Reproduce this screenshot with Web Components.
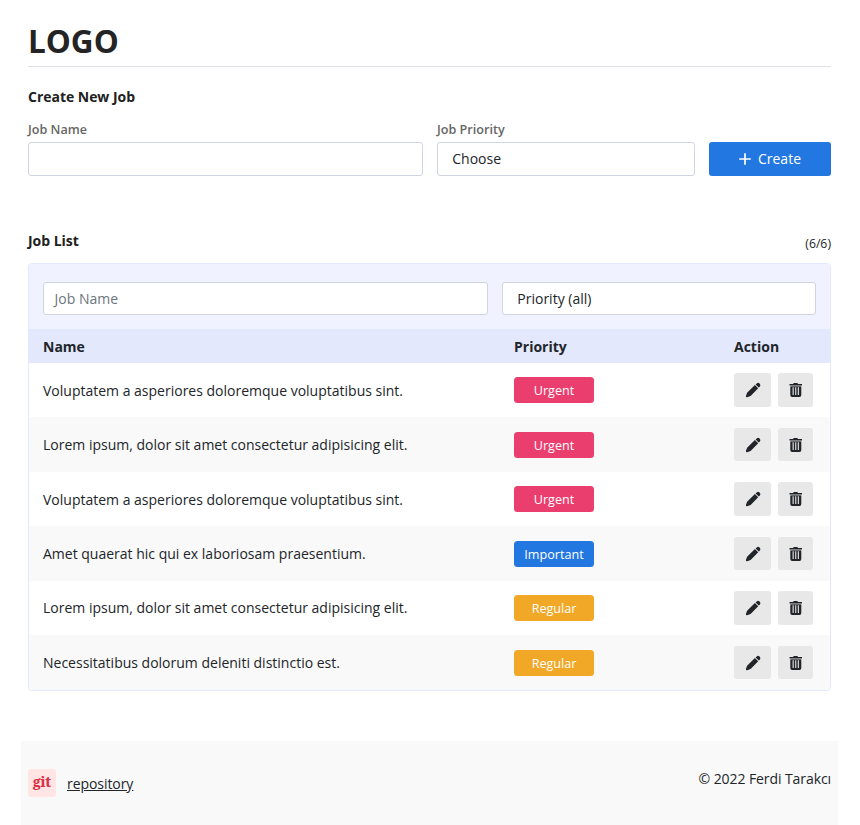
<!DOCTYPE html>
<html lang="en">
<head>
<meta charset="utf-8">
<title>Job List</title>
<style>
body{margin:0;background:#fff;color:#212529;font:14px/21px "Open Sans","Noto Sans",sans-serif}
</style>
</head>
<body>
<job-app></job-app>
<script>
const define=(name,html,setup)=>customElements.define(name,class extends HTMLElement{
  connectedCallback(){
    if(this.shadowRoot)return;
    this.attachShadow({mode:"open"}).innerHTML=html;
    if(setup)setup(this,this.shadowRoot);
  }
});

define("text-field",`<style>
:host{display:block;box-sizing:border-box;height:34px;border:1px solid #ced4e0;border-radius:3px;background:#fff;padding:0 10.5px;line-height:32px}
:host([select]){padding:0 14.3px}
:host([placeholder]){color:#6c757d}
</style><slot></slot>`);

define("create-button",`<style>
:host{display:flex;height:34px;border-radius:3px;background:#2277e0;color:#fff;align-items:center;justify-content:center;gap:7px}
svg{width:12px;height:12px;display:block}
span{height:22px}
</style><svg viewBox="0 0 12 12"><path d="M6 .2v11.6M.2 6h11.6" stroke="#fff" stroke-width="1.7" fill="none"/></svg><span><slot></slot></span>`);

define("priority-badge",`<style>
:host{display:block;width:80px;height:26px;margin-top:.4px;border-radius:3.5px;background:#e93e6e;color:#fff;font-size:12.6px;line-height:27px;text-align:center}
:host([level=important]){background:#2277e0}
:host([level=regular]){background:#f1a826}
</style><slot></slot>`);

define("icon-button",`<style>
:host{display:flex;width:37px;height:33.5px;border-radius:3px;background:#e8e8e8;align-items:center;justify-content:center}
:host([icon=trash]){width:35px}
svg{width:16px;height:16px;margin-top:.5px;display:none;fill:#212529}
:host([icon=pencil]) .pencil,:host([icon=trash]) .trash{display:block}
</style>
<svg class="pencil" viewBox="0 0 16 16"><path d="M10.6 2.4 11.7 1.4Q13 .2 14.3 1.3L14.9 2Q16 3.3 14.9 4.4L13.8 5.6ZM9.9 3 13.2 6.3 6.1 13.5Q5.6 14 4.9 14.3L2.1 15.2Q.7 15.3.9 14L2 11Q2.3 10.5 2.6 10.2Z"/></svg>
<svg class="trash" viewBox="0 0 16 16"><path d="M5.4 1h4.3v.9h4.3v1.7H1.5V1.9h3.9Z"/><path fill="#777" d="M2.6 3.6h10.3v1H2.6Z"/><path fill-rule="evenodd" d="M2.3 4.4h11V13q0 2-1.8 2H4.1Q2.3 15 2.3 13ZM4.6 5.3V13h1.1V5.3ZM7.2 5.3V13h1.1V5.3ZM9.8 5.3V13h1.1V5.3Z"/></svg>`);

define("job-row",`<style>
:host{display:grid;grid-template-columns:471px 220px 1fr;align-items:center;height:54.43px;padding:0 14px}
:host(:nth-child(even)){background:#f9f9f9}
.actions{display:flex;gap:7px}
</style><span><slot></slot></span><slot name="priority"></slot>
<div class="actions"><icon-button icon="pencil"></icon-button><icon-button icon="trash"></icon-button></div>`);

define("job-table",`<style>
:host{display:block;border:1px solid #e2e8fd;border-radius:4px;overflow:hidden}
.filter{display:grid;grid-template-columns:445px 314px;gap:14px;padding:18px 14px 14px;background:#f0f3ff}
.filter text-field{height:33px;line-height:31px}
.head{display:grid;grid-template-columns:471px 220px 1fr;height:34px;line-height:35px;padding:0 14px;background:#e3e8fd;font-weight:700}
</style>
<div class="filter"><text-field placeholder>Job Name</text-field><text-field select>Priority (all)</text-field></div>
<div class="head"><span>Name</span><span>Priority</span><span>Action</span></div>
<div class="rows"></div>`,(el,root)=>{
  const rows=[
    ["Voluptatem a asperiores doloremque voluptatibus sint.","Urgent"],
    ["Lorem ipsum, dolor sit amet consectetur adipisicing elit.","Urgent"],
    ["Voluptatem a asperiores doloremque voluptatibus sint.","Urgent"],
    ["Amet quaerat hic qui ex laboriosam praesentium.","Important"],
    ["Lorem ipsum, dolor sit amet consectetur adipisicing elit.","Regular"],
    ["Necessitatibus dolorum deleniti distinctio est.","Regular"]];
  root.querySelector(".rows").innerHTML=rows.map(([n,p])=>`<job-row>${n}<priority-badge slot="priority" level="${p.toLowerCase()}">${p}</priority-badge></job-row>`).join("");
});

define("page-footer",`<style>
:host{display:flex;justify-content:space-between;background:#f9f9f9;height:84px;box-sizing:border-box;padding:28px 7px 0;margin:50px -7px 0}
.repo{display:flex;gap:11px;height:28px}
.git{width:28px;height:28px;border-radius:3px;background:#ffe5e3;color:#dc3049;font:800 13.5px/27px "Noto Serif","DejaVu Serif",serif;letter-spacing:-.1px;text-align:center}
.link{text-decoration:underline;line-height:30px;letter-spacing:-.06px}
.copy{line-height:20px;letter-spacing:-.08px}
</style>
<div class="repo"><span class="git">git</span><span class="link">repository</span></div><span class="copy">© 2022 Ferdi Tarakcı</span>`);

define("job-app",`<style>
:host{display:block;padding:0 29px 0 28px}
h1{margin:0;height:67px;box-sizing:border-box;padding-top:17px;font-size:31.5px;line-height:48px;color:#242424;border-bottom:1px solid #dee2e6}
h2{margin:0;font-size:14px;line-height:21px;color:#212121;letter-spacing:-.03px}
.new{margin-top:19px}
.create{display:grid;grid-template-columns:395px 258px 122px;gap:14px;align-items:end;margin-top:11px}
label{display:block;font-size:12.6px;line-height:21px;padding-top:1px;margin-bottom:2px;color:#666;font-weight:600}
.title{display:flex;justify-content:space-between;margin:54px 0 12px}
.count{font-size:12.25px;line-height:27px;height:21px}
</style>
<h1>LOGO</h1>
<h2 class="new">Create New Job</h2>
<div class="create">
<div><label>Job Name</label><text-field></text-field></div>
<div><label>Job Priority</label><text-field select>Choose</text-field></div>
<create-button>Create</create-button></div>
<div class="title"><h2>Job List</h2><span class="count">(6/6)</span></div>
<job-table></job-table>
<page-footer></page-footer>`);
</script>
</body>
</html>
